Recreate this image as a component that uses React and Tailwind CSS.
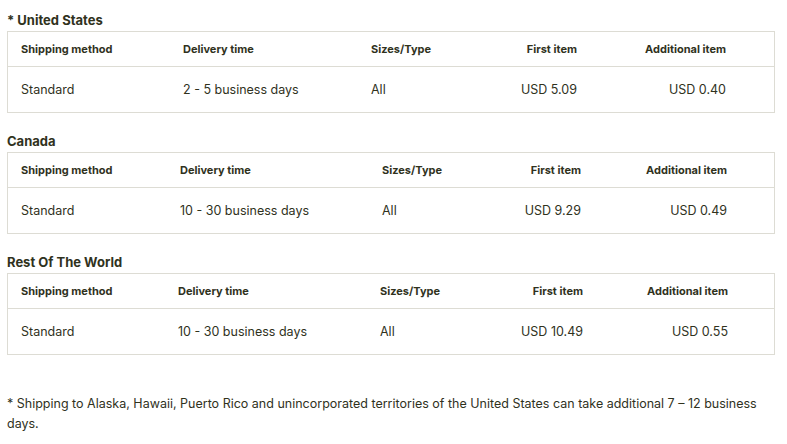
import React from "react";

const tables = [
  {
    title: "* United States",
    cols: "grid-cols-[162px_188px_106px_100px_149px]",
    delivery: "2 - 5 business days",
    first: "USD 5.09",
    additional: "USD 0.40",
    gap: "mt-0",
  },
  {
    title: "Canada",
    cols: "grid-cols-[159px_202px_99px_100px_146px]",
    delivery: "10 - 30 business days",
    first: "USD 9.29",
    additional: "USD 0.49",
    gap: "mt-[18px]",
  },
  {
    title: "Rest Of The World",
    cols: "grid-cols-[157px_202px_103px_100px_145px]",
    delivery: "10 - 30 business days",
    first: "USD 10.49",
    additional: "USD 0.55",
    gap: "mt-[18px]",
  },
];

const ShippingTable = ({ table }) => (
  <section className={table.gap}>
    <h3 className="text-[13px] font-bold leading-5 mb-px">{table.title}</h3>
    <div className="w-[768px] border border-[#dddcd4]">
      {/* Header */}
      <div className={`grid ${table.cols} pl-[13px] h-[35px] items-center border-b border-[#dddcd4] text-[11px] font-bold`}>
        <div>Shipping method</div>
        <div>Delivery time</div>
        <div>Sizes/Type</div>
        <div className="text-right">First item</div>
        <div className="text-right">Additional item</div>
      </div>
      {/* Row */}
      <div className={`grid ${table.cols} pl-[13px] pt-[2px] h-[45px] items-center text-[12.5px]`}>
        <div>Standard</div>
        <div>{table.delivery}</div>
        <div>All</div>
        <div className="text-right">{table.first}</div>
        <div className="text-right">{table.additional}</div>
      </div>
    </div>
  </section>
);

const App = () => {
  return (
    <div className="bg-white min-h-screen pl-[7px] pt-[10px] text-[#30321d] font-['Inter',sans-serif]">
      {tables.map((table) => (
        <ShippingTable key={table.title} table={table} />
      ))}
      <p className="mt-[39px] w-[768px] text-[12.5px] leading-5">
        * Shipping to Alaska, Hawaii, Puerto Rico and unincorporated territories of the United States can take additional 7 – 12 business days.
      </p>
    </div>
  );
};

export default App;
